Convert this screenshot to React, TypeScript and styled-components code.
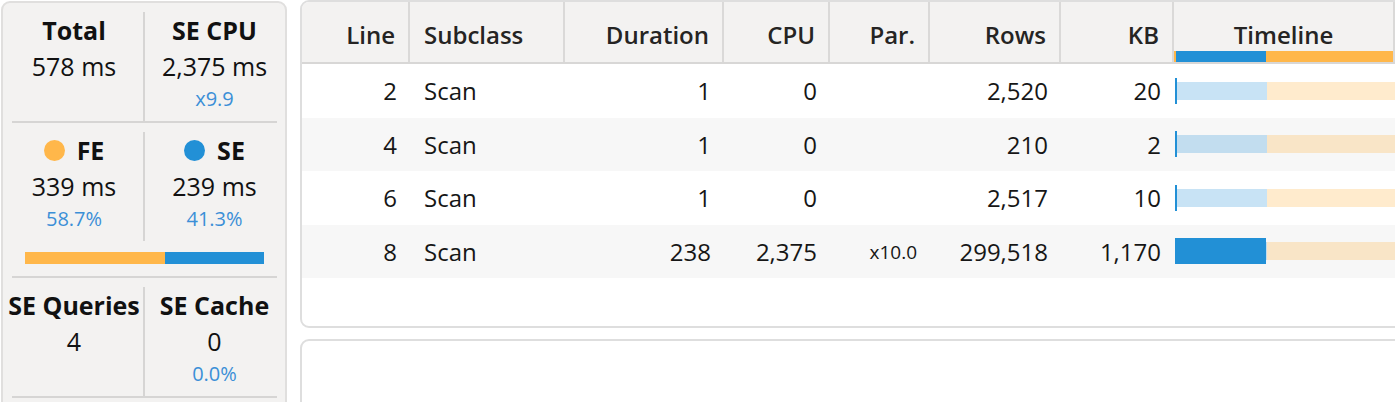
import React from 'react';
import styled, { createGlobalStyle } from 'styled-components';

const FE_COLOR = '#ffb74a';
const SE_COLOR = '#2290d6';
const COLUMNS = '108px 155px 159px 106px 100px 131px 113px 221px 1fr';
const SE_SPAN = 92;
const MAX_DURATION = 238;

const GlobalStyle = createGlobalStyle`
  html, body {
    margin: 0;
    overflow: hidden;
    background: #ffffff;
  }
  body {
    font-family: 'Open Sans', 'Noto Sans', sans-serif;
    color: #1b1a19;
  }
`;

const Page = styled.div`
  display: flex;
  align-items: flex-start;
  gap: 13px;
  width: 1420px;
  padding-left: 1px;
`;

const StatPanel = styled.aside`
  flex-shrink: 0;
  box-sizing: border-box;
  width: 286px;
  height: 470px;
  margin-top: 1px;
  padding: 9px 8px 0 9px;
  background: #f3f2f1;
  border: 2px solid #e0dfde;
  border-radius: 9px;
`;

const StatRow = styled.div<{ $divider?: boolean; $first?: boolean }>`
  display: grid;
  grid-template-columns: 133px 1fr;
  border-bottom: ${(p) => (p.$divider ? '2px solid #d6d5d4' : 'none')};
  padding-top: ${(p) => (p.$first ? '0' : '9px')};
`;

const StatCell = styled.div<{ $side: 'left' | 'right' }>`
  display: flex;
  flex-direction: column;
  align-items: center;
  box-sizing: border-box;
  min-width: 0;
  padding: 0 0 7px;
  padding-right: ${(p) => (p.$side === 'left' ? '7px' : '0')};
  padding-left: ${(p) => (p.$side === 'right' ? '7px' : '0')};
  border-right: ${(p) => (p.$side === 'left' ? '2px solid #d6d5d4' : 'none')};
`;

const StatLabel = styled.div`
  display: flex;
  align-items: center;
  gap: 12px;
  height: 36px;
  font-size: 25px;
  font-weight: 700;
  line-height: 36px;
  white-space: nowrap;
  color: #111;
`;

const Dot = styled.span<{ $color: string }>`
  width: 21px;
  height: 21px;
  border-radius: 50%;
  background: ${(p) => p.$color};
`;

const StatValue = styled.div`
  font-size: 25px;
  line-height: 36px;
  white-space: nowrap;
  color: #111;
`;

const StatNote = styled.div`
  height: 30px;
  font-size: 20px;
  line-height: 30px;
  color: #3b8fd7;
`;

const SplitSection = styled.div`
  padding: 11px 13px 12px;
  border-bottom: 2px solid #d6d5d4;
`;

const SplitBar = styled.div`
  display: flex;
  height: 12px;
`;

const SplitPart = styled.div<{ $color: string }>`
  background: ${(p) => p.$color};
`;

const RightColumn = styled.div`
  flex: 1;
  display: flex;
  flex-direction: column;
  gap: 11px;
  min-width: 0;
`;

const TablePanel = styled.section`
  box-sizing: border-box;
  height: 328px;
  background: #fff;
  border: 2px solid #dedede;
  border-radius: 9px;
  overflow: hidden;
`;

const DetailPanel = styled.section`
  box-sizing: border-box;
  height: 120px;
  background: #fff;
  border: 2px solid #dedede;
  border-radius: 9px;
`;

const HeaderRow = styled.div`
  display: grid;
  grid-template-columns: ${COLUMNS};
  height: 62px;
  background: #f3f2f1;
  border-bottom: 2px solid #d8d7d6;
  box-sizing: border-box;
`;

const HeadCell = styled.div<{ $align: 'left' | 'right' }>`
  display: flex;
  align-items: center;
  justify-content: ${(p) => (p.$align === 'left' ? 'flex-start' : 'flex-end')};
  box-sizing: border-box;
  padding: 6px 13px 0 14px;
  border-right: 2px solid #dad9d8;
  font-size: 24px;
  font-weight: 600;
  line-height: 32px;
  color: #252423;
  white-space: nowrap;
`;

const TimelineHead = styled.div`
  display: flex;
  flex-direction: column;
  align-items: stretch;
  box-sizing: border-box;
  padding-top: 17px;
  border-right: 2px solid #dad9d8;
  font-size: 24px;
  font-weight: 600;
  line-height: 32px;
  color: #252423;
  text-align: center;
`;

const HeadTimelineBar = styled.div`
  display: flex;
  height: 11px;
  background: ${FE_COLOR};
`;

const HeadTimelineSe = styled.div`
  width: 90px;
  margin-left: 2px;
  background: ${SE_COLOR};
`;

const BodyRow = styled.div<{ $striped: boolean }>`
  display: grid;
  grid-template-columns: ${COLUMNS};
  height: 53.5px;
  background: ${(p) => (p.$striped ? '#f7f7f7' : '#ffffff')};
`;

const Cell = styled.div<{ $align: 'left' | 'right'; $small?: boolean }>`
  display: flex;
  align-items: center;
  justify-content: ${(p) => (p.$align === 'left' ? 'flex-start' : 'flex-end')};
  padding: 1px 13px 0 14px;
  font-size: ${(p) => (p.$small ? '19px' : '24px')};
  line-height: 32px;
  color: #161616;
  white-space: nowrap;
`;

const TimelineCell = styled.div`
  display: flex;
  align-items: center;
`;

const Track = styled.div`
  position: relative;
  display: flex;
  flex: 1;
  height: 18px;
`;

const TrackPart = styled.div<{ $kind: 'se' | 'fe' }>`
  flex: ${(p) => (p.$kind === 'se' ? `0 0 ${SE_SPAN}px` : '1')};
  margin-left: ${(p) => (p.$kind === 'se' ? '1px' : '0')};
  background: ${(p) =>
    p.$kind === 'se' ? 'rgba(34, 144, 214, 0.25)' : 'rgba(255, 176, 60, 0.26)'};
`;

const DurationBar = styled.div`
  position: absolute;
  top: -4px;
  left: 1px;
  height: 26px;
  background: ${SE_COLOR};
`;

interface QueryRow {
  line: number;
  subclass: string;
  duration: number;
  cpu: string;
  par: string;
  rows: string;
  kb: string;
}

const queries: QueryRow[] = [
  { line: 2, subclass: 'Scan', duration: 1, cpu: '0', par: '', rows: '2,520', kb: '20' },
  { line: 4, subclass: 'Scan', duration: 1, cpu: '0', par: '', rows: '210', kb: '2' },
  { line: 6, subclass: 'Scan', duration: 1, cpu: '0', par: '', rows: '2,517', kb: '10' },
  { line: 8, subclass: 'Scan', duration: 238, cpu: '2,375', par: 'x10.0', rows: '299,518', kb: '1,170' },
];

const headers: { title: string; align: 'left' | 'right' }[] = [
  { title: 'Line', align: 'right' },
  { title: 'Subclass', align: 'left' },
  { title: 'Duration', align: 'right' },
  { title: 'CPU', align: 'right' },
  { title: 'Par.', align: 'right' },
  { title: 'Rows', align: 'right' },
  { title: 'KB', align: 'right' },
];

const App: React.FC = () => {
  return (
    <>
      <GlobalStyle />
      <Page>
        <StatPanel>
          <StatRow $divider $first>
            <StatCell $side="left">
              <StatLabel>Total</StatLabel>
              <StatValue>578 ms</StatValue>
            </StatCell>
            <StatCell $side="right">
              <StatLabel>SE CPU</StatLabel>
              <StatValue>2,375 ms</StatValue>
              <StatNote>x9.9</StatNote>
            </StatCell>
          </StatRow>
          <StatRow>
            <StatCell $side="left">
              <StatLabel>
                <Dot $color={FE_COLOR} />
                FE
              </StatLabel>
              <StatValue>339 ms</StatValue>
              <StatNote>58.7%</StatNote>
            </StatCell>
            <StatCell $side="right">
              <StatLabel>
                <Dot $color={SE_COLOR} />
                SE
              </StatLabel>
              <StatValue>239 ms</StatValue>
              <StatNote>41.3%</StatNote>
            </StatCell>
          </StatRow>
          <SplitSection>
            <SplitBar>
              <SplitPart $color={FE_COLOR} style={{ width: '58.7%' }} />
              <SplitPart $color={SE_COLOR} style={{ width: '41.3%' }} />
            </SplitBar>
          </SplitSection>
          <StatRow $divider>
            <StatCell $side="left">
              <StatLabel>SE Queries</StatLabel>
              <StatValue>4</StatValue>
            </StatCell>
            <StatCell $side="right">
              <StatLabel>SE Cache</StatLabel>
              <StatValue>0</StatValue>
              <StatNote>0.0%</StatNote>
            </StatCell>
          </StatRow>
        </StatPanel>

        <RightColumn>
          <TablePanel>
            <HeaderRow>
              {headers.map((h) => (
                <HeadCell key={h.title} $align={h.align}>
                  {h.title}
                </HeadCell>
              ))}
              <TimelineHead>
                Timeline
                <HeadTimelineBar>
                  <HeadTimelineSe />
                </HeadTimelineBar>
              </TimelineHead>
            </HeaderRow>
            {queries.map((q, i) => (
              <BodyRow key={q.line} $striped={i % 2 === 1}>
                <Cell $align="right">{q.line}</Cell>
                <Cell $align="left">{q.subclass}</Cell>
                <Cell $align="right">{q.duration}</Cell>
                <Cell $align="right">{q.cpu}</Cell>
                <Cell $align="right" $small>
                  {q.par}
                </Cell>
                <Cell $align="right">{q.rows}</Cell>
                <Cell $align="right">{q.kb}</Cell>
                <TimelineCell>
                  <Track>
                    <TrackPart $kind="se" />
                    <TrackPart $kind="fe" />
                    <DurationBar
                      style={{ width: Math.max(2, (q.duration / MAX_DURATION) * (SE_SPAN - 1)) }}
                    />
                  </Track>
                </TimelineCell>
              </BodyRow>
            ))}
          </TablePanel>
          <DetailPanel />
        </RightColumn>
      </Page>
    </>
  );
};

export default App;
